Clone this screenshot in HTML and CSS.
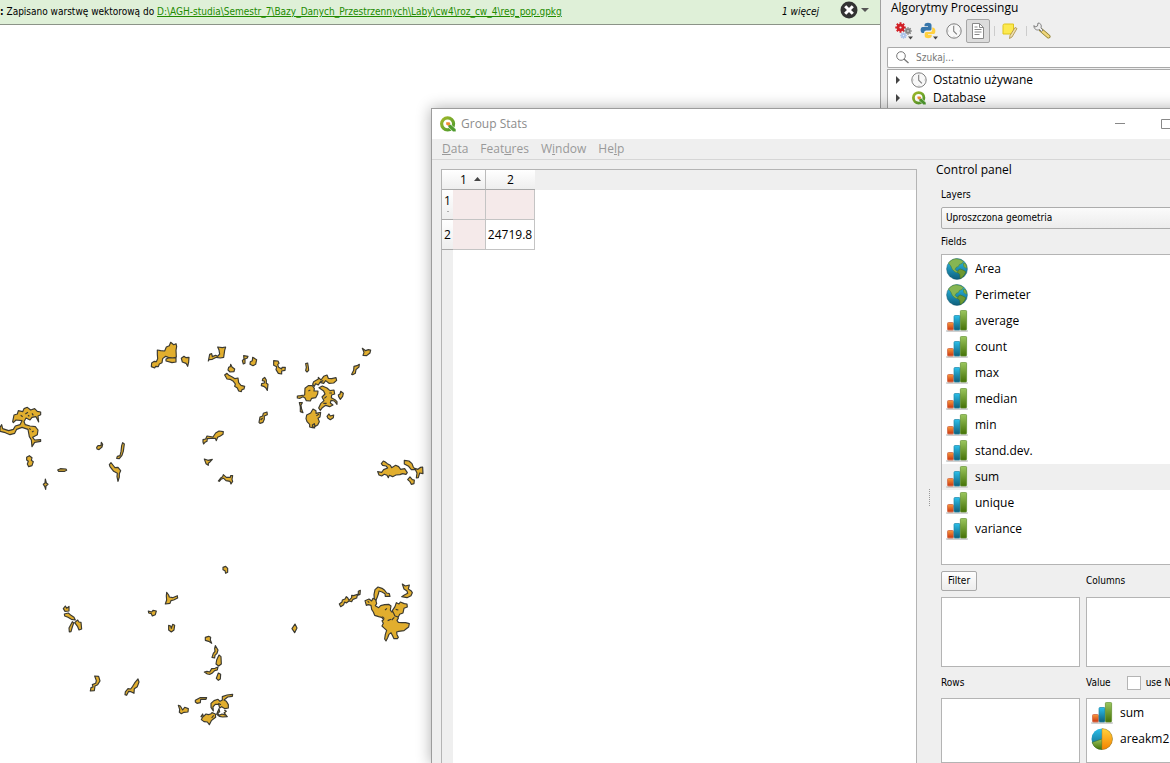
FILE: index.html
```
<!DOCTYPE html>
<html lang="pl">
<head>
<meta charset="utf-8">
<title>Group Stats</title>
<link rel="stylesheet" href="styles.css">
</head>
<body>
<svg class="defs" aria-hidden="true">
  <defs>
    <linearGradient id="gr" x2="0" y2="1"><stop stop-color="#f79a3c"/><stop offset="1" stop-color="#c93410"/></linearGradient>
    <linearGradient id="gb" x2="0" y2="1"><stop stop-color="#2bc0ec"/><stop offset="1" stop-color="#0f5f7c"/></linearGradient>
    <linearGradient id="gg" x2="0" y2="1"><stop stop-color="#9cc75f"/><stop offset="1" stop-color="#467207"/></linearGradient>
    <linearGradient id="go" x2="0" y2="1"><stop stop-color="#ffd23c"/><stop offset="1" stop-color="#f58200"/></linearGradient>
    <linearGradient id="gq" x2="1" y2="1"><stop stop-color="#a0b82a"/><stop offset="1" stop-color="#4d9a2c"/></linearGradient>
    <symbol id="bars" viewBox="0 0 22 22">
      <rect x="0" y="20" width="22" height="2" rx="1" fill="#cfcfcf"/>
      <rect x="1.5" y="12.5" width="6" height="7.5" rx="1" fill="url(#gr)" stroke="#d9795a"/>
      <rect x="8" y="5.5" width="6" height="14.5" rx="1" fill="url(#gb)" stroke="#1c86a8" stroke-width=".7"/>
      <rect x="14.4" y=".4" width="6.2" height="19.6" rx="1" fill="url(#gg)" stroke="#5d8c28" stroke-width=".7"/>
    </symbol>
    <symbol id="globe" viewBox="0 0 22 22">
      <circle cx="11" cy="11" r="10.4" fill="url(#gb)" stroke="#14546c" stroke-width=".5"/>
      <path d="M2.500 5C4.500 2.300 7 1.100 10 .8l4 .6 3.500 2-1.500 2.200-2.600.8-.8 1.800-2.600 1.300-1 1.800 1.600 1.600 2 .6-.6 1.200-3-.8-2.600-2.400L4.800 8z" fill="#86b653" stroke="#4c7d2a" stroke-width=".5"/>
      <path d="M12 12.500l2-1.600 3 1.200 2.800 1.700-1.200 2.600-2.400 3-2 1.200-.4-4-2-2z" fill="#6d9930" stroke="#3f6c1c" stroke-width=".5"/>
      <path d="M17.300 5.300l2 .1 1.700 4-1.200.9-2-2z" fill="#84b144" stroke="#4c7d2a" stroke-width=".5"/>
    </symbol>
    <symbol id="pie" viewBox="0 0 22 22">
      <circle cx="11" cy="11" r="10.5" fill="url(#gb)"/>
      <path d="M11 11L1.1 14.4A10.5 10.5 0 0 0 11 21.5z" fill="url(#gg)" stroke="#3e6d1d" stroke-width=".5"/>
      <path d="M11 .5a10.5 10.5 0 0 1 0 21z" fill="url(#go)" stroke="#b88120" stroke-width=".5"/>
    </symbol>
    <symbol id="qgis" viewBox="0 0 16 16">
      <circle cx="7.6" cy="7.800" r="6" fill="none" stroke="url(#gq)" stroke-width="3.200"/>
      <path d="M8 8.4h2.800L16 13.200v2.600h-2.900L8 11z" fill="#4f9b2e" stroke="#fff" stroke-width=".6"/>
      <path d="M6.2 6.2h3.200l1 1-.8 2-2 .4-1.400-1.200z" fill="#ef8a32"/>
    </symbol>
    <symbol id="clock" viewBox="0 0 16 16">
      <circle cx="8" cy="8" r="7.2" fill="#f8f8f8" stroke="#808080"/>
      <path d="M7.7 3v5.2l3.2 3.2" fill="none" stroke="#808080" stroke-width="1.1"/>
      <path d="M8 1.5v1M8 13.5v1M1.5 8h1M13.5 8h1" stroke="#aaa"/>
    </symbol>
    <symbol id="gear" viewBox="-10 -10 20 20">
      <circle r="4.500" fill="none" stroke="currentColor" stroke-width="5"/>
      <path d="M0-9.5V-6M0 6v3.5M-9.5 0H-6M6 0h3.5M-6.7-6.7l2.5 2.5M4.2 4.2l2.5 2.5M-6.7 6.7l2.5-2.5M4.2-4.2l2.5-2.5" stroke="currentColor" stroke-width="3.6"/>
    </symbol>
  </defs>
</svg>

<div class="desktop">
  <main class="map">
    <div class="message">
      <p class="message-text"><b>:</b> Zapisano warstwę wektorową do <a href="#layer">D:\AGH-studia\Semestr_7\Bazy_Danych_Przestrzennych\Laby\cw4\roz_cw_4\reg_pop.gpkg</a></p>
      <span class="more">1 więcej</span>
      <button class="close" aria-label="Zamknij">
        <svg width="18" height="18" viewBox="0 0 18 18"><circle cx="9" cy="9" r="8.5" fill="#333"/><path d="M5.2 5.2l7.6 7.6M12.8 5.2l-7.6 7.6" stroke="#fff" stroke-width="3"/></svg>
        <svg width="8" height="4" viewBox="0 0 8 4"><path d="M0 0h8L4 4z" fill="#555"/></svg>
      </button>
    </div>
    <svg class="canvas" role="img" aria-label="Mapa">
      <g class="areas" transform="translate(0 -25)">
        <g transform="translate(0 390) scale(.3333)">
          <path d="M38 95L42 75 52 72 55 62 68 65 72 56 82 52 92 60 104 56 112 64 122 66 122 74 114 78 116 96 108 80 96 82 90 90 78 84 72 95 76 104 90 108 106 110 114 120 112 134 98 142 104 150 122 149 122 154 104 157 96 170 94 150 88 140 84 118 66 112 50 118 44 130 30 134 16 128 0 124 0 112 5 104 8 116 26 122 40 118 46 108 60 104 66 92 48 90 40 98Z"/>
          <path d="M62 76l6 4M76 72l8-5M96 70l4 6M96 126l5-3M84 76l4 3M88 115l4 4"/>
          <path d="M80 202l8-5 8 6-2 8 6 4-4 12-10 3-4-8 3-8-5-4z"/>
          <path d="M173 240l8-4 17 1 2 4-6 3-18 0z"/>
          <path d="M130 283l5-4 1-12 3 12 5 4-6 5-1 10-3-9z"/>
          <path d="M290 172l4-5 9 0 1-10 4 6-2 8-9 8-6-2z"/>
          <path d="M368 158l5 4-3 22-4 12-8 10-8-1 2-6 8-2 3-12 2-18z"/>
          <path d="M328 224l5-6 8 10 4 5 9-1 8 10-4 9 0 10-4 13-3-14 1-10-11-6-7-9-4-5z"/>
        </g>
        <g transform="translate(140 335) scale(.3333)">
          <path d="M35 84l8-5 6 1 4-9-1-13 0-13 10 2 12 1 5-12 9-4 4-10 9 7 7-3 2 8-2 12 1 20-10 4-14-3-8-3-9 7-2 12-8 4-3 8-8-1-3 5-10-4z"/>
          <path d="M78 72l10-4 8 1 12-1 0 13-12 2-18-5z"/>
          <path d="M124 70l8-6 6 4 9-1-1 14-3 13-5-9-11-4z"/>
          <path d="M205 78l4-20 6-2 2 9 10-4 6 3 6-7-2-12-4-9 14 2 10-2-3 10-3 21-10 2-12-2-12 6-10 1z"/>
          <path d="M311 62l13 2-2 5-7 3 0 13-5 2-3-10 5-5zM338 67l12 7-3 14-8 4-9-4 1-8 6-3z"/>
          <path d="M272 88l4 8 8 6-2 8-12 1-6-6 2-8 5-2zM254 120l7-5 6 6 10 5 8 5 9-2 2 14 7 8 11 3-2 8-6 2-2 6-8-2-4-9-8-5 2-7-6-8-10-6-9-1z"/>
          <path d="M374 127l5 8 0 10 5 3-2 18-5-8-6-4-7-2 1-6 8-2 0-6-6-1 1-5z"/>
          <path d="M357 262l3-16 8-3 2-8 11-4 1 8-9 4 0 10-4 9-9 3z M362 255l6-6"/>
          <path d="M189 314l8-2 4-9 18 3 8-12 10-6 13 2-1 8-8 5-8 4-4 10-3-7-14 0-10 1-1 8-6 3-4 5-2-6z"/>
          <path d="M193 372l11 4 13-3-7 8-5 4 0 6-7-5z"/>
          <path d="M235 438l7-9 6-4 2-6 9 8 12 0 1-5 6 0-2 11 2 6-5 8-3-8-12-2-7-7-8 3-5 6z"/>
        </g>
        <g transform="translate(255 335) scale(.3333)">
          <path d="M56 77l13 1 3 7-4 4 3 8 9 5 1-5 10 0-1 9-10 2 0 9-10-2-7-11 2-9-9-4z"/>
          <path d="M152 86l6-2 2 12 1 10-5 5-4-4 2-10z"/>
          <path d="M322 40l10 7 8-3 7 1-2 9-10 8-11-1 3-9z"/>
          <path d="M290 118l6-12 1-12 9-2 7-4-1 8-9 8-2 11-8 4z"/>
          <path d="M150 160l10-8 12 0 6 8-1 8 12 0-1 9-6 11-12 2-4 8-12-1-4-8-6-4-9 5-8-1 0-6 10-1 12-2z"/>
          <path d="M176 140l14-8 0-5 8 8 8-11 10-4 4 10 10 1 13-3 2 8-9 8-14 1-10-8-6 8-11-3-5 8-8-4-4 8-5-6z"/>
          <path d="M192 158l10-5 14 6 9 8 12-2 2 12-9 3-1 8 11 6 6 6 0 8-8-10-10-2-2 8 8 6-10 5-12-4-10 7-6 8-5-7 6-13 10-9-6-11 9-9-4-9z"/>
          <path d="M155 240l12-6 7-12 9 5 0 8 14-3-2 14-6 4 4 10-5 10-9 5 0 4-7-1-8-2 0-8-8-8-3-9zM172 270l6-4 2 8-6 5z"/>
          <path d="M133 203h9l-4 8 2 12 4 10-8-3 0-14zM250 180l5-3 2-8 8 6-2 9-7 9-5-8zM216 244l6-7 4 6 10-3-1 8-9 6-7-4z"/>
          <path d="M160 168l6-3M205 205l10 0M223 174l8 0M184 242l8-4M208 190l7-6M195 141l10-4"/>
          <path d="M379 386l6-8 6 3 6 5 9 5 4 7 12-7 9 4 6 8 12-2 8 12-4 5-10-2-8 3-12 1-10 5-10-4-3 7-4-7-8-3-8 5-8-3-4-10 12 2 6-8 12-5-5-6-10-2z"/>
          <path d="M448 376l14 2 9 8 4 10 6 8-12 0-8-10-13-7zM479 400l10 3 8-6 6-1 1 20-10-2-4 14-6 1 2-15zM458 434l7-8 7 8 6 1-1 11-8 2-4-8z"/>
        </g>
        <g transform="translate(50 560) scale(.3333)">
          <path d="M40 146l6-8 4 7 7-6 0 14-12 1zM43 162l12-3 8 7 9 6 4 8-12-2-10-6-10-4zM67 185l4 4-4 12-4 14-5 1-1-12zM74 188l9-8 4 6 6 1 2 20-8 3-4-10z"/>
          <path d="M295 153l10 3 4-5 10 2-3 11-9 4-3-7-8-2zM350 97l6 8 2 6 10 2 14-6 1 7-12 6-8 2-3 8-14 2 4-12-1-12zM356 196l6 2 2 7 4-12 6 3-2 14-8 6-8-6z"/>
          <path d="M134 348l12 1 4 14-7 11-8 4-2 14-12 1 2-10 6-2-2-7 10-4 2-8zM226 396l8-10 8 1 6-8 6-10 10-12 3 9-5 14-9 6-1 14-9-5-7-1-6 12-5-2z"/>
        </g>
        <g transform="translate(165 560) scale(.3333)">
          <path d="M174 22l8-3 6 6 0 12-6 3-2-8-6-3zM390 192l6 12-7 14-8-12zM121 232l10-3 6 3-1 8 4 10-9-6-10-3zM151 257l8 13-3 10-6 6-1 8-8-2 4-12 5-6-1-9zM162 285l6 5 1 22-8 6-8-6 2-12zM118 336l8-2 8 2 6-10 10-1 9-4-2 9-8 2-8 8-6 3-8-1zM160 339l7 4-1 14-6 4-6-6z"/>
          <path d="M40 436l6 2 7 12 6-8 11 4-1 10-12 1-8 4-6-4 1-9zM91 421l14-8 20 0-2 5-16 0-1 10-10 2-5-4z"/>
          <path d="M138 442l0-12 9-8 12-4 6 6 7-4 0-10 14-5 17-2-1 6-14 2-11 9 7 4 6 10 0 10-10 2-10-6-6 4-3-11-10 0-7 8 1 12z"/>
          <path d="M108 470l5-8 2 8 8-8 7 2 7-2 4-4 10 4 1 10-8 6-5 4-6 12-6-8-10-1-8-6 4-8zM162 446l2 10-7 2 6 8 8-4 12 4 4 4-14 1-10-2-8-6zM178 450l6 4-7 5 8 9M140 474l6-8M160 430l8 4"/>
        </g>
        <g transform="translate(325 570) scale(.3333)">
          <path d="M43 102l8-6 1-6 8-3 4-7 4 3 4 8 8-8 0-7 6 1 14-5 0-8 6-3-1 12-8 3-2 8-11 4-4 7-8-2-8 6-5-3-3 8-9 6z"/>
          <path d="M148 88l-1-14 3-15 9-8 12 4 8 6 6 8 8 2 2 8-14 0-1-8-9-5-9-3-1 6-4 12-5 12zM232 42l9 6 12-3-3 12 8 5 4 6-4 9-12 6-16-3 8-5 10-5-2-7-9-6z"/>
          <path d="M120 92l12-5 8 6 4-8 8 4 3 12-4 6 10 6 6-6 12-3 12-1 7 5-2 12 4 6 8-2 4 6-2 6 8 0 2 9-4 6 4 6 10 1 12 0 11 3-2 10-8 6-6 5-16 2-6 2 1 8 4 8-3 4-10 0-5-10-4-8-6 5-4 10-5 10-4-6 2-14 4-12-9-8-5-5 4-8-4-8 5-3-6-7-9-2-12-4-4-10-5-8-2-12-8-2-6 2z"/>
          <path d="M202 122l8-12 4-12 8 4 4-6 12 5 8 1 1 9-10 4-3 14-10 4-4 8-10-3-4-8zM180 120l6-5M188 152l10-4M212 118l8 2M200 150l8-8M128 94l5 4M172 140l6 6"/>
        </g>
      </g>
    </svg>
  </main>

  <aside class="dock">
    <h2>Algorytmy Processingu</h2>
    <div class="tools">
      <button aria-label="Modele"><svg width="18" height="18" viewBox="0 0 18 18"><svg x="0" y="0" width="11" height="11" color="#d21f26"><use href="#gear"/></svg><svg x="9" y="5" width="8" height="8" color="#858585"><use href="#gear"/></svg><svg x="5" y="10" width="7" height="7" color="#a9c1ea"><use href="#gear"/></svg><path d="M13 14.500h5l-2.500 3z" fill="#444"/></svg></button>
      <button aria-label="Skrypty"><svg width="18" height="18" viewBox="0 0 18 18"><path d="M4.500 3c0-3 7-3 7 0v4q0 1.500-1.500 1.500H6Q4 8.500 4 11H2.500C0 11 0 5 2.500 5H8V4.300H4.500z" fill="#3776ab"/><path d="M4.700 14c0 3 7 3 7 0v-1.200H8V12h6c2-1 2-6-1-6.500h-.8V8q0 2-1.700 2H6.300Q4.700 10 4.700 12z" fill="#ffd040"/><path d="M13 14.500h5l-2.500 3z" fill="#444"/></svg></button>
      <button aria-label="Historia"><svg width="16" height="16"><use href="#clock"/></svg></button>
      <button class="active" aria-label="Wyniki"><svg width="12" height="16" viewBox="0 0 12 16"><path d="M.5.500h7l4 4v11H.500z" fill="#fff" stroke="#888"/><path d="M7.500.500v4h4M2.500 4h3M2.500 6.500h7M2.500 9h7M2.500 11.500h5" fill="none" stroke="#888"/></svg></button>
      <span class="sep"></span>
      <button aria-label="Edycja"><svg width="16" height="16" viewBox="0 0 16 16"><path d="M1 2.500Q1 1 2.500 1h9v8l-2 2H1z" fill="#fce94f" stroke="#dfc51b"/><path d="M13 4.500l2 1-5 8.500-2.500 1.500.5-3z" fill="#eee0b0" stroke="#a98b42" stroke-width=".8"/></svg></button>
      <span class="sep"></span>
      <button aria-label="Opcje"><svg width="18" height="18" viewBox="0 0 18 18"><path d="M8 8l7.500 6.500" stroke="#8c7b2c" stroke-width="4" stroke-linecap="round"/><path d="M8.500 8.500l7 6" stroke="#f0d77c" stroke-width="2.400" stroke-linecap="round"/><path d="M5 1l-.5 3L2 5 1 3.500C.5 7 4 9 6.500 7.500l2 2 1.500-1.500-2-2C9 3 7.500 1 5 1z" fill="#eee" stroke="#777" stroke-width=".9"/></svg></button>
    </div>
    <label class="search">
      <svg width="13" height="13" viewBox="0 0 13 13"><circle cx="5" cy="5" r="4.300" fill="none" stroke="#777"/><path d="M8 8l4.500 4" stroke="#777" stroke-width="1.300"/></svg>
      <input type="text" placeholder="Szukaj..." aria-label="Szukaj">
    </label>
    <ul class="tree">
      <li><svg width="5" height="8" viewBox="0 0 5 8"><path d="M0 0l4 4-4 4z" fill="#444"/></svg><svg width="16" height="16"><use href="#clock"/></svg>Ostatnio używane</li>
      <li><svg width="5" height="8" viewBox="0 0 5 8"><path d="M0 0l4 4-4 4z" fill="#444"/></svg><svg width="16" height="14"><use href="#qgis"/></svg>Database</li>
    </ul>
  </aside>

  <section class="window">
    <header class="titlebar">
      <svg width="16" height="16"><use href="#qgis"/></svg>
      <h1>Group Stats</h1>
      <button aria-label="Minimalizuj"><svg width="10" height="10"><path d="M0 4.500h10" stroke="#888"/></svg></button>
      <button aria-label="Maksymalizuj"><svg width="10" height="10"><path d="M.5.500h9v9h-9z" fill="none" stroke="#888"/></svg></button>
      <button aria-label="Zamknij okno"><svg width="10" height="10"><path d="M0 0l10 10M10 0L0 10" stroke="#888"/></svg></button>
    </header>
    <nav class="menubar">
      <button><u>D</u>ata</button>
      <button>Feat<u>u</u>res</button>
      <button>W<u>i</u>ndow</button>
      <button>He<u>l</u>p</button>
    </nav>
    <div class="content">
      <div class="results">
        <div class="head-strip"></div>
        <table>
          <thead><tr><td></td><th scope="col">1<svg class="sort" width="7" height="4" viewBox="0 0 7 4"><path d="M0 4h7L3.500 0z" fill="#444"/></svg></th><th scope="col">2</th></tr></thead>
          <tbody>
            <tr><th scope="row">1<span class="more-mark"></span></th><td class="pink"></td><td class="pink"></td></tr>
            <tr><th scope="row">2</th><td class="pink"></td><td>24719.8</td></tr>
          </tbody>
        </table>
        <div class="row-strip"></div>
      </div>
      <div class="splitter"></div>
      <div class="panel">
        <h2>Control panel</h2>
        <div class="controls">
          <label for="layer">Layers</label>
          <select id="layer"><option>Uproszczona geometria</option></select>
          <h3>Fields</h3>
          <ul class="list fields">
            <li><svg><use href="#globe"/></svg>Area</li>
            <li><svg><use href="#globe"/></svg>Perimeter</li>
            <li><svg><use href="#bars"/></svg>average</li>
            <li><svg><use href="#bars"/></svg>count</li>
            <li><svg><use href="#bars"/></svg>max</li>
            <li><svg><use href="#bars"/></svg>median</li>
            <li><svg><use href="#bars"/></svg>min</li>
            <li><svg><use href="#bars"/></svg>stand.dev.</li>
            <li class="selected"><svg><use href="#bars"/></svg>sum</li>
            <li><svg><use href="#bars"/></svg>unique</li>
            <li><svg><use href="#bars"/></svg>variance</li>
          </ul>
          <div class="grid">
            <div class="caption"><button class="filter">Filter</button></div>
            <h3 class="caption">Columns</h3>
            <ul class="list"></ul>
            <ul class="list"></ul>
            <h3 class="caption">Rows</h3>
            <div class="caption value"><h3>Value</h3><label><input type="checkbox">use NULL</label></div>
            <ul class="list"></ul>
            <ul class="list">
              <li><svg><use href="#bars"/></svg>sum</li>
              <li><svg><use href="#pie"/></svg>areakm2</li>
            </ul>
          </div>
        </div>
      </div>
    </div>
  </section>
</div>
</body>
</html>
```
FILE: styles.css
```
:root { --small: 10px/16px "DejaVu Sans Condensed", "DejaVu Sans", sans-serif; }
* { box-sizing: border-box; }
body {
  margin: 0;
  font: 12px/16px "Open Sans", "Noto Sans", sans-serif;
  color: #000;
}
h1, h2, h3, p, ul { margin: 0; padding: 0; font: inherit; }
ul { list-style: none; }
button { font: inherit; color: inherit; border: 0; padding: 0; background: none; }
svg { flex: none; }
.defs { position: absolute; width: 0; height: 0; }

.desktop { position: relative; display: flex; height: 100vh; overflow: hidden; background: #efefef; }

/* map canvas */
.map { flex: 1; min-width: 0; display: flex; flex-direction: column; background: #fff; border-right: 1px solid #a0a0a0; }
.message {
  display: flex; align-items: center; height: 25px; padding-right: 11px;
  background: #dff0d8; border-bottom: 1px solid #8b9387;
  font: var(--small);
}
.message-text { flex: 1; white-space: nowrap; }
.message a { color: #228b00; }
.more { font-style: italic; }
.close { display: flex; align-items: center; gap: 3px; margin: 0 0 4px 21px; }
.canvas { flex: 1; width: 100%; min-height: 0; }
.areas path { fill: #e1ae2e; stroke: #3b3a32; stroke-width: 3.5; stroke-linejoin: round; }

/* processing dock */
.dock { flex: 0 0 289px; display: flex; flex-direction: column; padding-left: 6px; }
.dock h2 { height: 19px; line-height: 15px; padding-left: 4px; }
.tools { display: flex; align-items: center; height: 24px; padding-left: 4px; }
.tools button { display: flex; align-items: center; justify-content: center; width: 25px; height: 24px; }
.tools .active, .tools .sep + button { width: 24px; }
.tools .active { background: #dcdcdc; border: 1px solid #a6a6a6; border-radius: 2px; }
.sep { width: 1px; height: 10px; margin: 0 3px 0 4px; background: #ccc; }
.search {
  display: flex; align-items: center; gap: 7px; height: 21px; margin: 4px 0 1px; padding-left: 8px;
  background: #fff; border: 1px solid #a9a9a9; border-right: 0; border-radius: 2px 0 0 2px;
}
.search input { flex: 1; min-width: 0; border: 0; padding: 0; outline: 0; font: var(--small); }
.search input::placeholder { color: #777; }
.tree { flex: 1; padding-top: 1px; background: #fff; border: 1px solid #a9a9a9; border-right: 0; }
.tree li { display: flex; align-items: center; height: 18px; padding-left: 8px; }
.tree li svg + svg { margin: 0 6px 0 10px; }

/* dialog */
.window {
  position: absolute; top: 108px; left: 431px; right: -66px; bottom: -1px;
  display: flex; flex-direction: column;
  background: #efefef; border: 1px solid #9c9c9c; box-shadow: 0 0 14px rgba(0, 0, 0, .32);
}
.titlebar { display: flex; align-items: center; height: 30px; padding-left: 8px; background: #fff; color: #8c8c8c; }
.titlebar h1 { flex: 1; margin-left: 5px; }
.titlebar button { display: grid; place-items: center; width: 46px; height: 30px; }
.menubar { display: flex; gap: 12px; height: 21px; padding-left: 10px; color: #999; border-bottom: 1px solid #d6d6d6; }
.content { flex: 1; min-height: 0; display: flex; padding-left: 9px; }

.results {
  flex: 1; display: grid; grid-template: 20px auto 1fr / auto 1fr; margin-top: 9px;
  background: #fff; border: 1px solid #b4b4b4; border-bottom: 0;
}
.head-strip { grid-area: 1 / 1 / 2 / 3; background: #efefef; }
.results table { grid-area: 1 / 1 / 3 / 2; border-collapse: separate; border-spacing: 0; table-layout: fixed; width: 93px; }
.results th, .results td { padding: 0; font-weight: normal; text-align: center; }
thead tr { height: 20px; }
tbody tr { height: 30px; }
thead th, thead td { background: linear-gradient(#fff, #eee); border-bottom: 1px solid #a9a9a9; }
thead td { width: 11px; }
thead th { border-right: 1px solid #bbb; }
thead th:nth-child(2) { width: 33px; }
thead th:last-child { width: 49px; border-right: 0; }
.sort { margin: 0 -3px 3px 7px; }
tbody th { background: linear-gradient(#fff, #eee); border-bottom: 1px solid #a9a9a9; line-height: 16px; }
.more-mark { display: block; width: 2px; height: 1px; margin: 2px auto 5px; background: #aaa; }
tbody td { border-right: 1px solid #c4c4c4; border-bottom: 1px solid #c4c4c4; }
.pink { background: #f5eaea; }
.row-strip { grid-area: 3 / 1 / 4 / 2; width: 11px; background: #efefef; }

.splitter { width: 3px; height: 17px; margin: 329px 4px 0 12px; border-left: 1px dotted #999; }

.panel { flex: 0 0 299px; display: flex; flex-direction: column; padding-top: 2px; }
.controls { flex: 1; min-height: 0; display: flex; flex-direction: column; padding: 9px 10px 0 5px; font: var(--small); }
.controls select {
  height: 22px; margin: 4px 0 5px; padding: 0 0 0 4px; border: 1px solid #acacac; border-radius: 2px; appearance: none;
  background: linear-gradient(#fbfbfb, #ececec); font: var(--small); color: #000;
}
.list { padding-top: 1px; background: #fff; border: 1px solid #b4b4b4; font: 12px/16px "Open Sans", "Noto Sans", sans-serif; }
.list li { display: flex; align-items: center; gap: 7px; height: 26px; padding-left: 4px; }
.list svg { width: 22px; height: 22px; }
.selected { background: #efefef; }
.fields { flex: 0 0 311px; margin-top: 4px; }
.grid { flex: 1; display: grid; grid-template: 32px 70px 31px 1fr / 1fr 1fr; column-gap: 6px; }
.caption { display: flex; align-items: center; }
.filter { width: 36px; height: 20px; border: 1px solid #a9a9a9; border-radius: 2px; background: linear-gradient(#fefefe, #ededed); }
.value { gap: 16px; }
.value label { display: flex; align-items: center; gap: 5px; white-space: nowrap; }
.value input { appearance: none; width: 14px; height: 14px; margin: 0; background: #fff; border: 1px solid #b4b4b4; }
```
